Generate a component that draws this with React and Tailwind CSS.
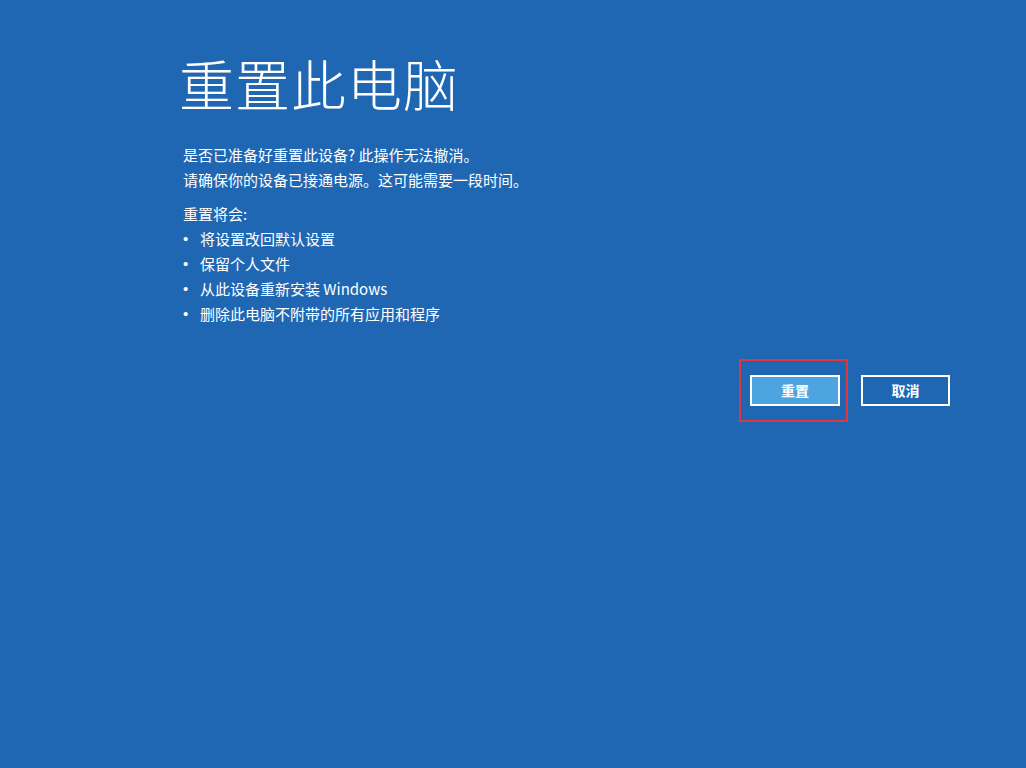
const FONT = { fontFamily: '"Noto Sans CJK SC", "Noto Sans", sans-serif' }

const ITEMS = ['将设置改回默认设置', '保留个人文件', '从此设备重新安装 Windows', '删除此电脑不附带的所有应用和程序']

export default function App() {
  return (
    <div className="h-[768px] w-[1026px] overflow-hidden bg-[#2067b3] text-white" style={FONT}>
      <div className="pl-[179px] pt-[44px]">
        <h1 className="text-[55px] font-light leading-[76px] tracking-[1px]">重置此电脑</h1>
        <div className="mt-[22px] pl-[4px] text-[15px] leading-[25px]">
          <p>是否已准备好重置此设备? 此操作无法撤消。</p>
          <p>请确保你的设备已接通电源。这可能需要一段时间。</p>
          <p className="mt-[9px]">重置将会:</p>
          <ul>
            {ITEMS.map((t) => (
              <li key={t} className="flex">
                <span className="w-[17px] font-['Liberation_Sans',sans-serif]">•</span>
                <span>{t}</span>
              </li>
            ))}
          </ul>
        </div>
      </div>
      <div className="mt-[33px] flex justify-end gap-[13px] pr-[76px]">
        <div className="border-2 border-[#e0373f] pb-[13px] pl-[9px] pr-[6px] pt-[14px]">
          <button
            type="button"
            className="h-[31px] w-[90px] border-2 border-white bg-[#4ea4de] text-[14px] font-bold"
          >
            重置
          </button>
        </div>
        <div className="py-[16px]">
          <button
            type="button"
            className="h-[31px] w-[89px] border-2 border-white text-[14px] font-bold"
          >
            取消
          </button>
        </div>
      </div>
    </div>
  )
}
